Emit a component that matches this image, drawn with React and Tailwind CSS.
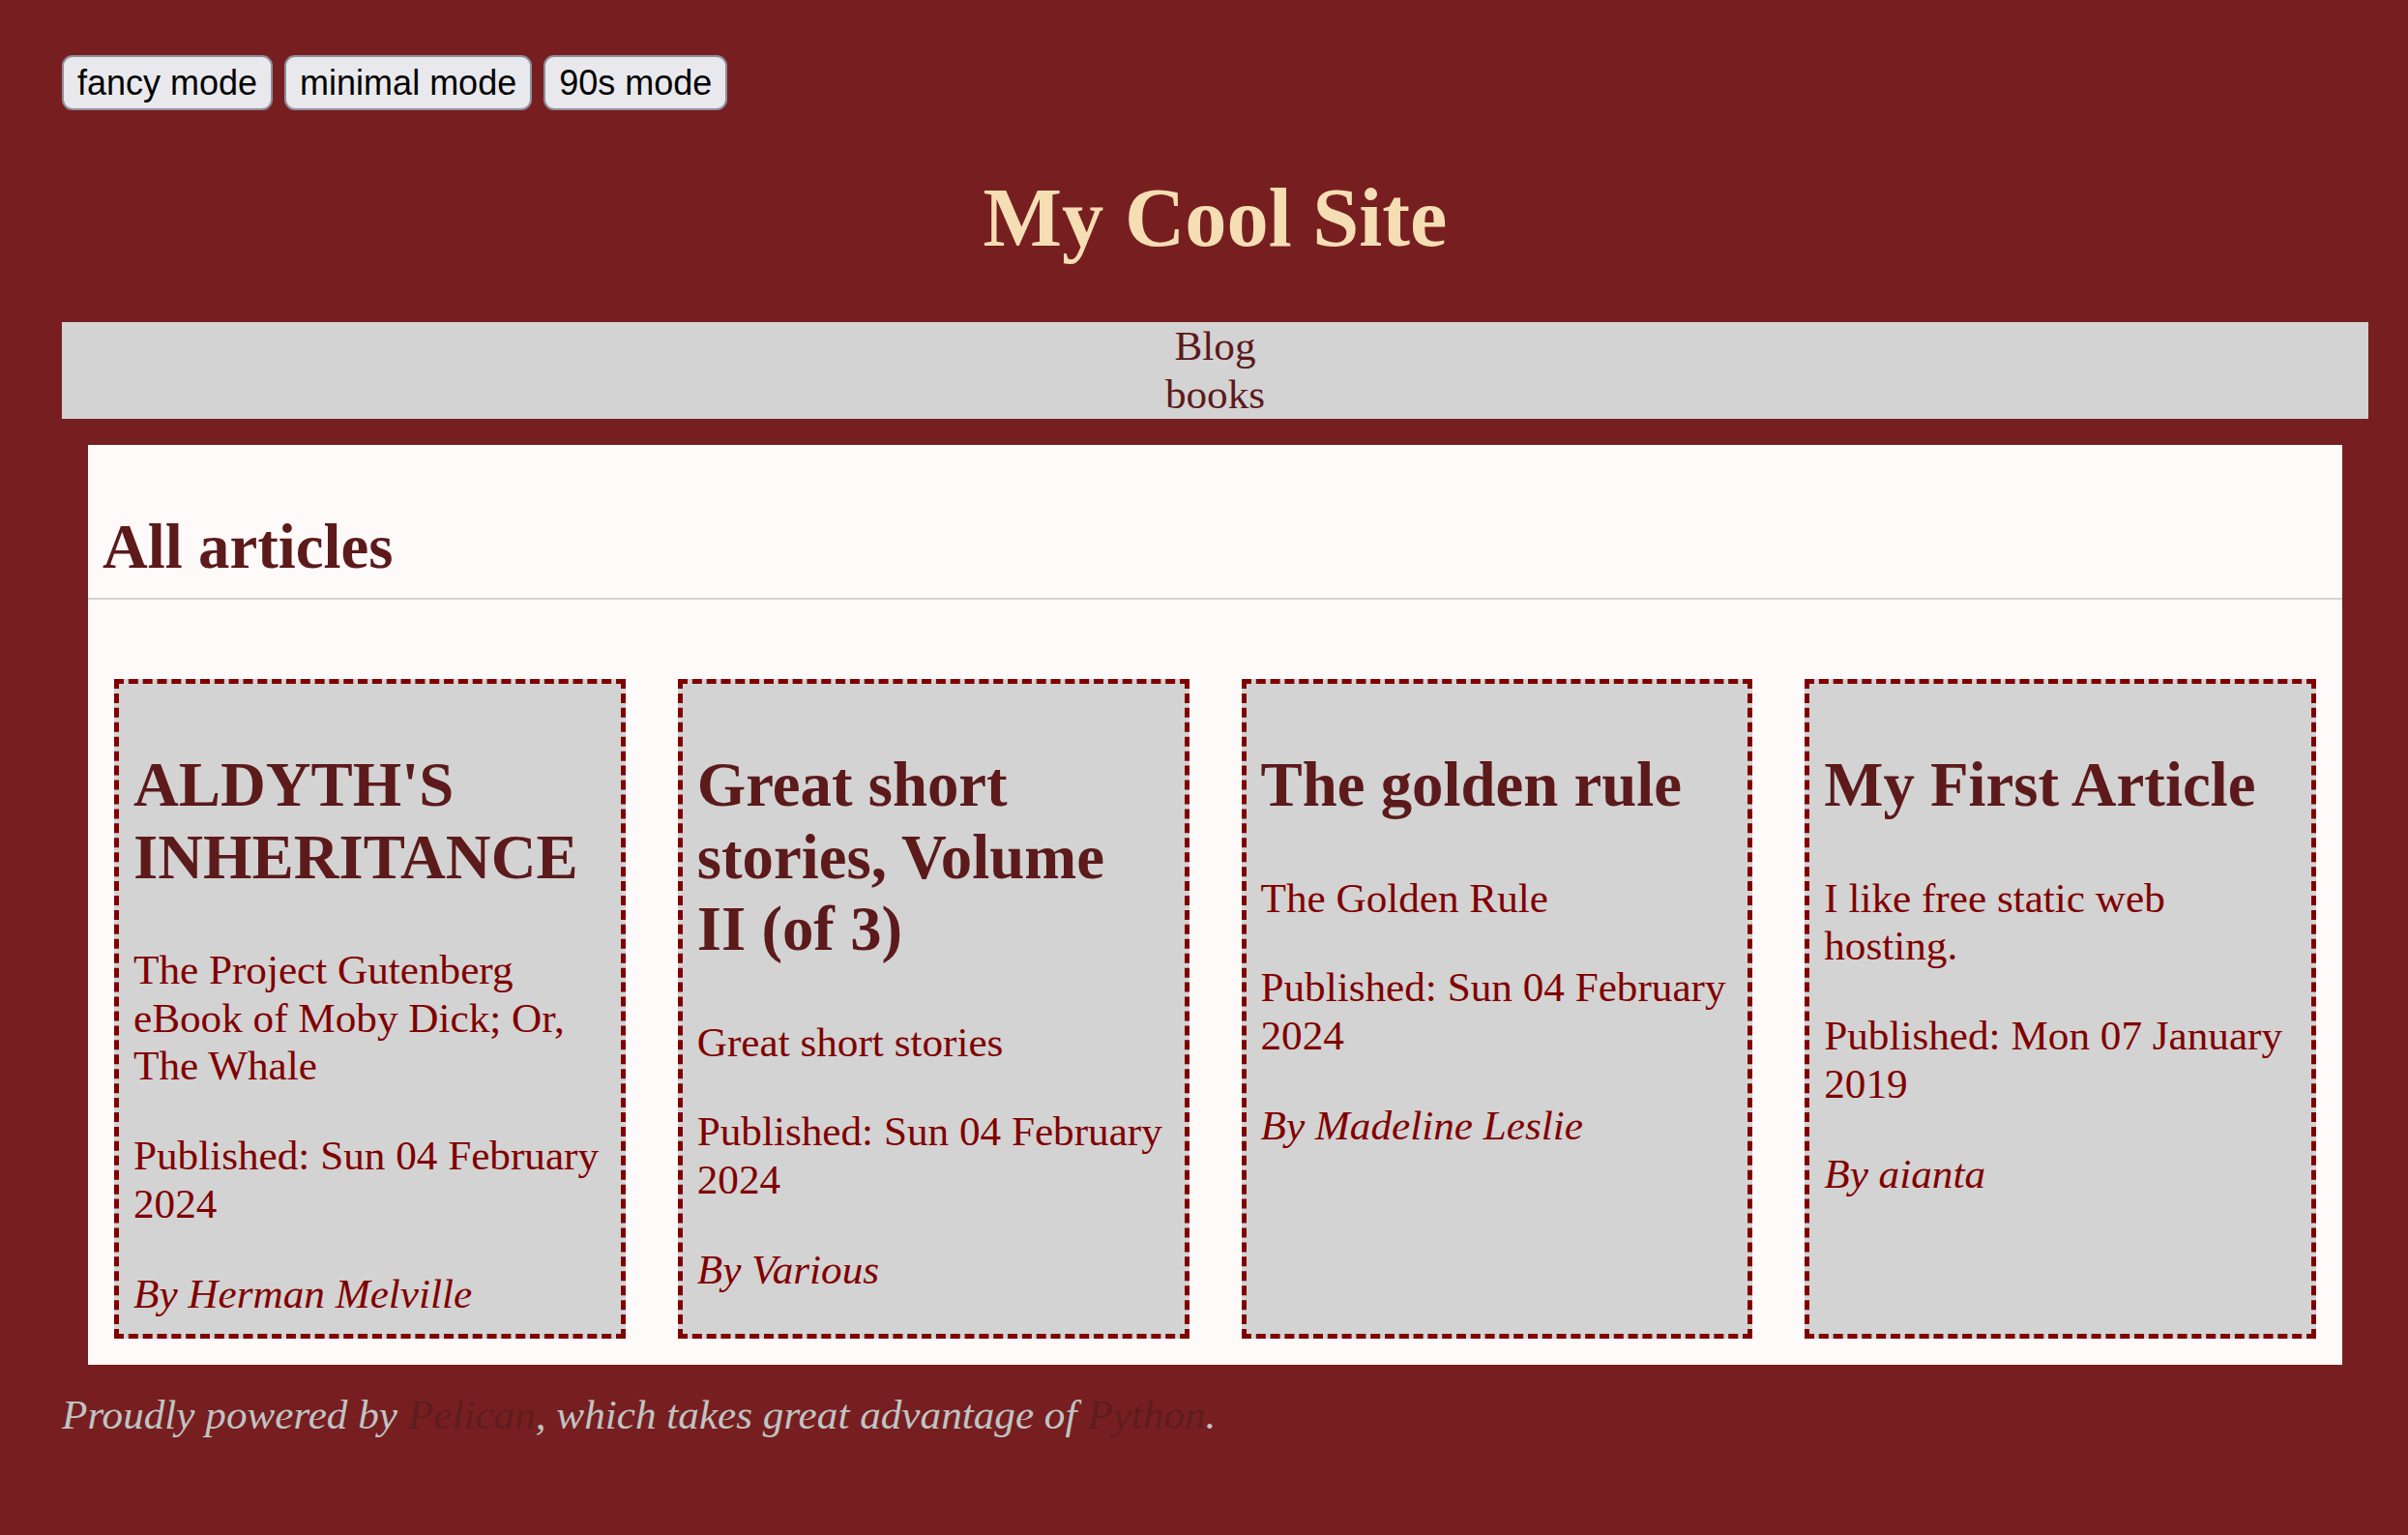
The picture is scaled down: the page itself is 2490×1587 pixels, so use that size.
const articles = [
    {
        title: "ALDYTH'S INHERITANCE",
        summary: 'The Project Gutenberg eBook of Moby Dick; Or, The Whale',
        date: 'Sun 04 February 2024',
        author: 'Herman Melville',
    },
    {
        title: 'Great short stories, Volume II (of 3)',
        summary: 'Great short stories',
        date: 'Sun 04 February 2024',
        author: 'Various',
    },
    {
        title: 'The golden rule',
        summary: 'The Golden Rule',
        date: 'Sun 04 February 2024',
        author: 'Madeline Leslie',
    },
    {
        title: 'My First Article',
        summary: 'I like free static web hosting.',
        date: 'Mon 07 January 2019',
        author: 'aianta',
    },
];

const modes = ['fancy mode', 'minimal mode', '90s mode'];

const ArticleCard = ({ article }) => (
    <article className="border-[5px] border-dashed border-[#800000] bg-[#d3d3d3] pl-[15px] pr-[20px] pt-[15px] pb-[16px]">
        <h2 className="mt-[52px] mb-[55px] text-[64.8px] leading-[74.5px] font-bold text-[#5c1a1b]">
            {article.title}
        </h2>
        <p className="text-[43.2px] leading-[49.7px] text-[#800000]">{article.summary}</p>
        <p className="mt-[43.2px] text-[43.2px] leading-[49.7px] text-[#800000]">Published: {article.date}</p>
        <p className="mt-[43.2px] text-[43.2px] leading-[49.7px] italic text-[#800000]">By {article.author}</p>
    </article>
);

const App = () => {
    return (
        <div className="min-h-screen bg-[#771f20] pt-[57px] pl-[64px] pr-[41px] pb-[40px] font-['Liberation_Serif',serif]">
            <div className="flex gap-[12px]">
                {modes.map((mode) => (
                    <button
                        key={mode}
                        className="h-[57px] px-[14px] rounded-[11px] border-2 border-[#8f8f9d] bg-[#e9e9ed] text-[36px] leading-none text-black font-['Liberation_Sans',sans-serif]"
                    >
                        {mode}
                    </button>
                ))}
            </div>

            <h1 className="mt-[62px] mb-[58px] text-center text-[86.4px] leading-[99px] font-bold text-[#f5deb3]">
                My Cool Site
            </h1>

            <nav className="bg-[#d3d3d3] text-center text-[43.2px] leading-[50px] text-[#5c1a1b]">
                <div>Blog</div>
                <div>books</div>
            </nav>

            <main className="mx-[27px] mt-[27px] bg-[#fffafa] pb-[27px]">
                <header className="pt-[68px] pb-[15px] pl-[15px] border-b-2 border-[#d3d3d3]">
                    <h2 className="text-[64.8px] leading-[75px] font-bold text-[#5c1a1b]">All articles</h2>
                </header>
                <div className="mt-[82px] px-[27px] grid grid-cols-4 gap-[54px]">
                    {articles.map((a) => (
                        <ArticleCard key={a.title} article={a} />
                    ))}
                </div>
            </main>

            <footer className="mt-[27px] text-[43.2px] leading-[50px] italic text-[#c0c4c4]">
                Proudly powered by <a className="text-[#5e1c1e]">Pelican</a>, which takes great advantage of{' '}
                <a className="text-[#5e1c1e]">Python</a>.
            </footer>
        </div>
    );
};

export default App;
